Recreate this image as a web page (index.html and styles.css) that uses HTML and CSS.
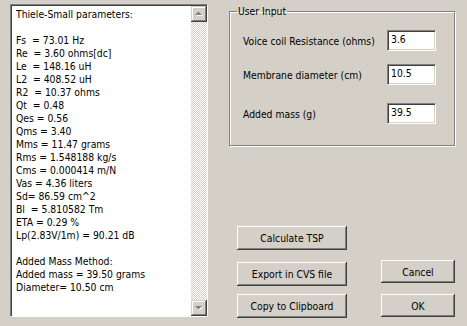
FILE: index.html
```html
<!DOCTYPE html>
<html lang="en">
<head>
    <meta charset="UTF-8">
    <title>Thiele-Small parameters</title>
    <link rel="stylesheet" href="styles.css">
</head>
<body>
    <div class="dialog">
        <!-- result text box -->
        <div class="output">
            <div class="output-text">Thiele-Small parameters:

Fs  = 73.01 Hz
Re  = 3.60 ohms[dc]
Le  = 148.16 uH
L2  = 408.52 uH
R2  = 10.37 ohms
Qt  = 0.48
Qes = 0.56
Qms = 3.40
Mms = 11.47 grams
Rms = 1.548188 kg/s
Cms = 0.000414 m/N
Vas = 4.36 liters
Sd= 86.59 cm^2
Bl  = 5.810582 Tm
ETA = 0.29 %
Lp(2.83V/1m) = 90.21 dB

Added Mass Method:
Added mass = 39.50 grams
Diameter= 10.50 cm</div>
            <div class="scrollbar">
                <div class="scroll-btn">
                    <svg width="12" height="12" viewBox="0 0 12 12">
                        <path d="M3 8h7L6.5 4.5z" fill="#fff"/>
                        <path d="M2 7h7L5.5 3.5z" fill="#808080"/>
                    </svg>
                </div>
                <div class="scroll-track"></div>
                <div class="scroll-btn">
                    <svg width="12" height="12" viewBox="0 0 12 12">
                        <path d="M3 5h7L6.5 8.5z" fill="#fff"/>
                        <path d="M2 4h7L5.5 7.5z" fill="#808080"/>
                    </svg>
                </div>
            </div>
        </div>

        <div class="side">
            <fieldset class="group">
                <legend>User Input</legend>
                <div class="field field-first">
                    <label for="re">Voice coil Resistance (ohms)</label>
                    <input type="text" id="re" value="3.6">
                </div>
                <div class="field">
                    <label for="diameter">Membrane diameter (cm)</label>
                    <input type="text" id="diameter" value="10.5">
                </div>
                <div class="field field-mass">
                    <label for="mass">Added mass (g)</label>
                    <input type="text" id="mass" value="39.5">
                </div>
            </fieldset>

            <div class="actions">
                <div class="action-col">
                    <button class="btn btn-wide btn-calc">Calculate TSP</button>
                    <button class="btn btn-wide btn-export">Export in CVS file</button>
                    <button class="btn btn-wide">Copy to Clipboard</button>
                </div>
                <div class="action-col action-col-right">
                    <button class="btn btn-small btn-cancel">Cancel</button>
                    <button class="btn btn-small">OK</button>
                </div>
            </div>
        </div>
    </div>
</body>
</html>
```

FILE: styles.css
```css
* {
    margin: 0;
    padding: 0;
    box-sizing: border-box;
}

body {
    background-color: #d4d0c8;
    color: #000;
    font-family: "DejaVu Sans Condensed", "DejaVu Sans", sans-serif;
    font-size: 10.3px;
}

.dialog {
    display: flex;
    width: 467px;
    height: 326px;
    padding: 4px 0 7px 10px;
}

/* sunken text box */
.output {
    display: flex;
    width: 198px;
    height: 313px;
    border: 1px solid;
    border-color: #808080 #fff #fff #808080;
}

.output-text {
    flex: 1;
    background-color: #fff;
    border-top: 1px solid #404040;
    border-left: 1px solid #404040;
    padding: 2px 4px;
    line-height: 13px;
    white-space: pre;
    overflow: hidden;
}

.scrollbar {
    display: flex;
    flex-direction: column;
    width: 16px;
    border-top: 1px solid #404040;
}

.scroll-btn {
    display: flex;
    align-items: center;
    justify-content: center;
    height: 16px;
    background-color: #d4d0c8;
    box-shadow: inset -1px -1px #404040, inset 1px 1px #d4d0c8, inset -2px -2px #808080, inset 2px 2px #fff;
}

.scroll-track {
    flex: 1;
    background: repeating-conic-gradient(#fff 0 25%, #d4d0c8 0 50%) 0 0 / 2px 2px;
}

.side {
    display: flex;
    flex-direction: column;
    width: 226px;
    margin-left: 21px;
    padding-top: 1px;
    padding-bottom: 1px;
}

/* etched group box */
.group {
    height: 141px;
    border: 1px solid #808080;
    box-shadow: inset 1px 1px #fff, 1px 1px #fff;
    padding: 0 18px 0 13px;
}

.group legend {
    margin-left: -6px;
    padding: 0 1px;
    line-height: 13px;
}

.field {
    display: flex;
    align-items: center;
    justify-content: space-between;
    height: 21px;
    margin-top: 13px;
}

.field-first {
    margin-top: 12px;
}

.field-mass {
    margin-top: 18px;
}

.field input {
    width: 49px;
    height: 21px;
    border: 1px solid;
    border-color: #808080 #fff #fff #808080;
    box-shadow: inset 1px 1px #404040, inset -1px -1px #d4d0c8;
    background-color: #fff;
    padding: 0 3px 3px;
    font: inherit;
    color: #000;
    outline: none;
}

.actions {
    display: flex;
    justify-content: space-between;
    align-items: flex-end;
    margin-top: auto;
    padding-left: 8px;
}

.action-col {
    display: flex;
    flex-direction: column;
}

.action-col-right {
    margin-bottom: 1px;
}

.btn {
    background-color: #d4d0c8;
    border: none;
    box-shadow: inset -1px -1px #404040, inset 1px 1px #fff, inset -2px -2px #808080, inset 2px 2px #d4d0c8;
    font: inherit;
    color: #000;
}

.btn-wide {
    width: 110px;
    height: 24px;
}

.btn-small {
    width: 74px;
    height: 23px;
}

.btn-calc {
    margin-bottom: 12px;
}

.btn-export {
    margin-bottom: 8px;
}

.btn-cancel {
    margin-bottom: 11px;
}
```
